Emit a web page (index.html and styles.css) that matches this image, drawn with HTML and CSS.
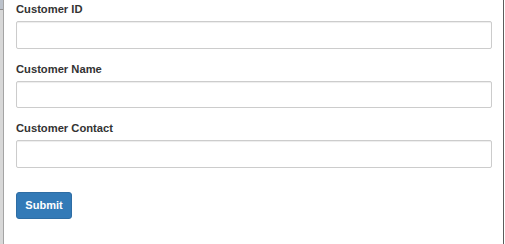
FILE: index.html
```html
<!DOCTYPE html>
<html lang="en">
<head>
    <meta charset="UTF-8">
    <meta name="viewport" content="width=device-width, initial-scale=1.0">
    <title>Customer</title>
    <link rel="stylesheet" href="styles.css">
</head>
<body>
    <div class="window">
        <!-- Left frame strip -->
        <div class="side-strip">
            <div class="side-top"></div>
        </div>

        <!-- Customer form -->
        <div class="modal-body">
            <form class="customer-form">
                <div class="form-group">
                    <label for="customer-id">Customer ID</label>
                    <input type="text" id="customer-id" class="form-control">
                </div>
                <div class="form-group">
                    <label for="customer-name">Customer Name</label>
                    <input type="text" id="customer-name" class="form-control">
                </div>
                <div class="form-group">
                    <label for="customer-contact">Customer Contact</label>
                    <input type="text" id="customer-contact" class="form-control">
                </div>
                <button type="submit" class="btn-submit">Submit</button>
            </form>
        </div>
    </div>
</body>
</html>
```

FILE: styles.css
```css
body {
    margin: 0;
    padding: 0;
    background-color: #fff;
    font-family: "Liberation Sans", Arial, sans-serif;
    color: #333;
}
.window {
    display: flex;
    height: 100vh;
    padding-right: 1px;
    box-sizing: border-box;
}
.side-strip {
    width: 3px;
    background-color: #d8d8d8;
    border-right: 1px solid #a4a4a4;
}
.side-top {
    height: 9px;
    background-color: #bcc2cb;
    border-bottom: 1px solid #909090;
}
.modal-body {
    flex: 1;
    padding: 1px 11px 0 12px;
    border-right: 1px solid #5c5c5c;
}
.form-group {
    margin-bottom: 12px;
}
label {
    display: block;
    font-size: 11.2px;
    line-height: 16px;
    font-weight: bold;
    margin-bottom: 4px;
}
.form-control {
    display: block;
    width: 100%;
    height: 27.5px;
    box-sizing: border-box;
    border: 1px solid #ccc;
    border-radius: 2px;
    box-shadow: inset 0 1px 1px rgba(0, 0, 0, 0.075);
    font-family: inherit;
    font-size: 11px;
    padding: 4px 9px;
    margin: 0;
}
.btn-submit {
    display: block;
    margin-top: 24px;
    width: 56px;
    height: 27px;
    padding: 0;
    font-family: inherit;
    font-size: 11px;
    font-weight: bold;
    color: #fff;
    background-color: #337ab7;
    border: 1px solid #2e6da4;
    border-radius: 3px;
    cursor: pointer;
}
```
